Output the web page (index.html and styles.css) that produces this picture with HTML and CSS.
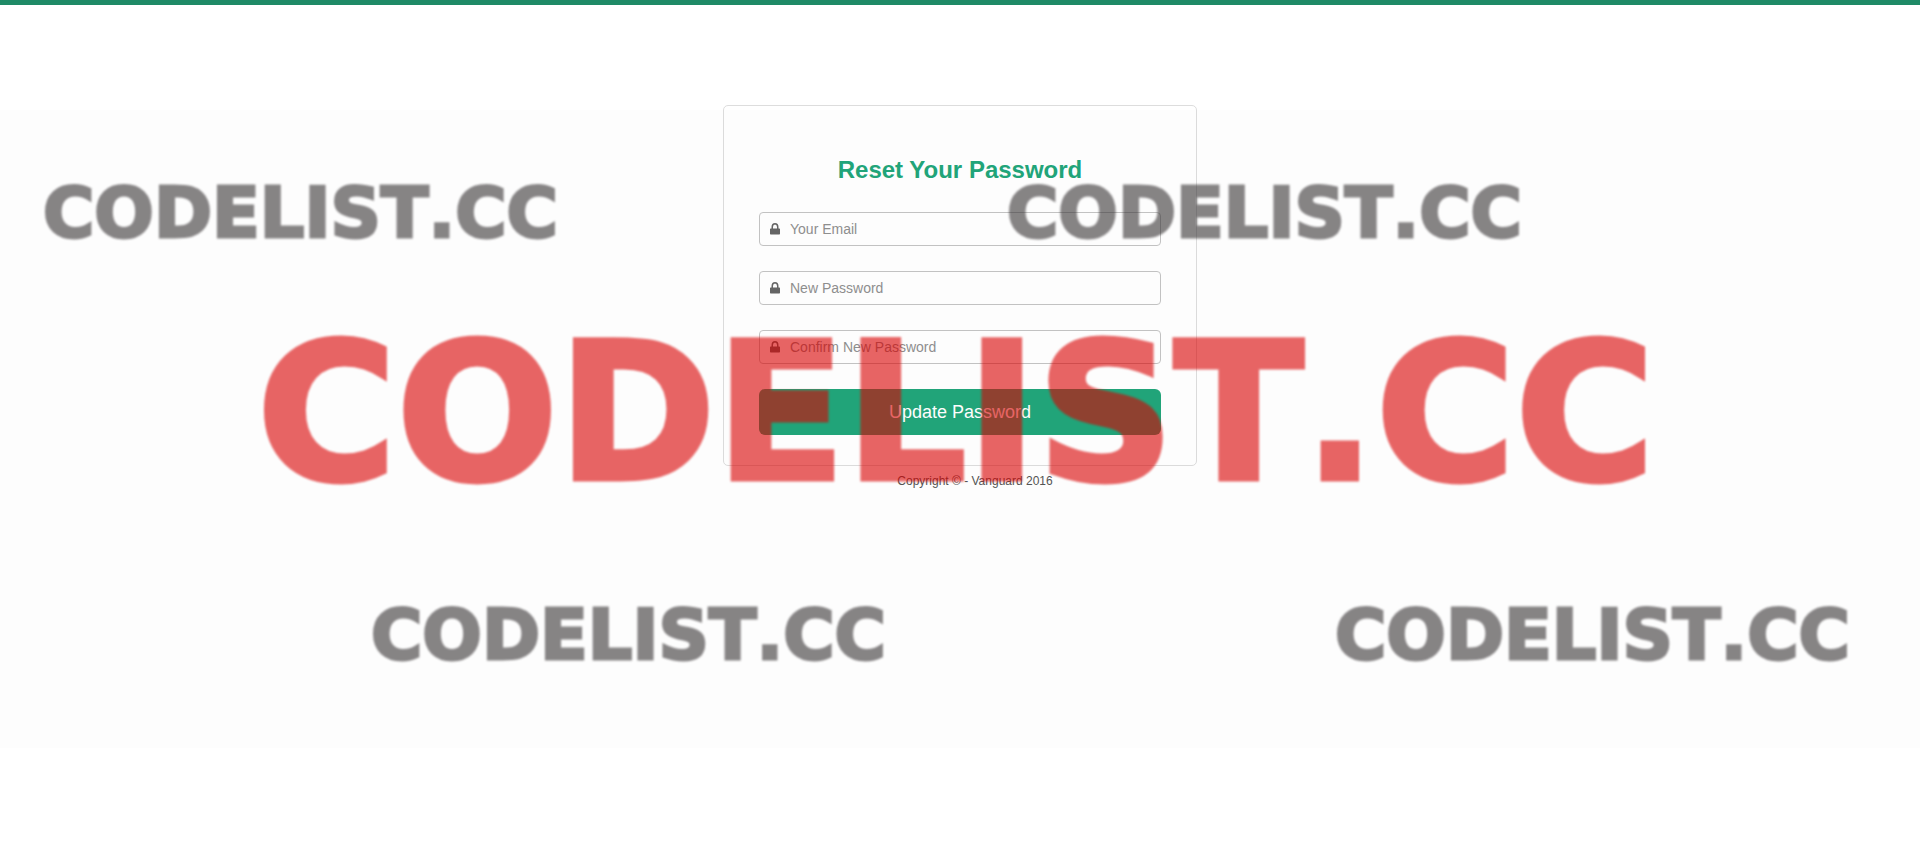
FILE: index.html
```
<!DOCTYPE html>
<html lang="en">
<head>
<meta charset="utf-8">
<title>Reset Your Password</title>
<link rel="stylesheet" href="styles.css">
</head>
<body>
<main class="page">
  <form class="card">
    <h1 class="title">Reset Your Password</h1>
    <label class="field">
      <svg class="icon" viewBox="0 0 10 12" aria-hidden="true"><path fill-rule="evenodd" d="M1.500 5.500V4a3.500 4 0 0 1 7 0v1.500h.8q.7 0 .7.700v4.600q0 .7-.7.700H.7q-.7 0-.7-.7V6.200q0-.7.7-.7zM3 5.500h4V4a2 2.500 0 0 0-4 0z"/></svg>
      <input class="input" type="text" placeholder="Your Email" aria-label="Your Email">
    </label>
    <label class="field">
      <svg class="icon" viewBox="0 0 10 12" aria-hidden="true"><path fill-rule="evenodd" d="M1.500 5.500V4a3.500 4 0 0 1 7 0v1.500h.8q.7 0 .7.700v4.600q0 .7-.7.700H.7q-.7 0-.7-.7V6.200q0-.7.7-.7zM3 5.500h4V4a2 2.500 0 0 0-4 0z"/></svg>
      <input class="input" type="password" placeholder="New Password" aria-label="New Password">
    </label>
    <label class="field">
      <svg class="icon" viewBox="0 0 10 12" aria-hidden="true"><path fill-rule="evenodd" d="M1.500 5.500V4a3.500 4 0 0 1 7 0v1.500h.8q.7 0 .7.700v4.600q0 .7-.7.700H.7q-.7 0-.7-.7V6.200q0-.7.7-.7zM3 5.500h4V4a2 2.500 0 0 0-4 0z"/></svg>
      <input class="input" type="password" placeholder="Confirm New Password" aria-label="Confirm New Password">
    </label>
    <button class="submit" type="button">Update Password</button>
  </form>
  <footer class="copyright">Copyright © - Vanguard 2016</footer>
</main>
<svg class="watermark" viewBox="0 0 1920 638">
  <g class="mark-small">
    <text x="43" y="127">CODELIST.CC</text>
    <text x="1007" y="127">CODELIST.CC</text>
    <text x="371" y="549">CODELIST.CC</text>
    <text x="1335" y="549">CODELIST.CC</text>
  </g>
  <text class="mark-large" x="257" y="369">CODELIST.CC</text>
</svg>
</body>
</html>
```
FILE: styles.css
```
* {
  box-sizing: border-box;
}

body {
  position: relative;
  margin: 0;
  min-height: 100vh;
  border-top: 5px solid #1f8a66;
  background: #fff;
  font-family: "Liberation Sans", Arial, sans-serif;
  font-size: 14px;
  line-height: 20px;
  color: #444;
}

.page {
  max-width: 474px;
  margin: 0 auto;
  padding-top: 100px;
}

.card {
  display: flex;
  flex-direction: column;
  gap: 25px;
  padding: 48px 35px 30px;
  border: 1px solid #ddd;
  border-radius: 5px;
}

.title {
  margin: 0 0 1px;
  font-size: 24px;
  line-height: 32px;
  font-weight: bold;
  text-align: center;
  color: #22a67a;
}

.field {
  display: flex;
  align-items: center;
  gap: 10px;
  height: 34px;
  padding: 0 10px;
  border: 1px solid #c4c4c4;
  border-radius: 4px;
}

.icon {
  flex: none;
  width: 10px;
  height: 12px;
  fill: #666;
}

.input {
  flex: 1;
  min-width: 0;
  padding: 0;
  border: 0;
  outline: 0;
  background: transparent;
  font: inherit;
}

.input::placeholder {
  color: #909090;
  opacity: 1;
}

.submit {
  height: 46px;
  border: 0;
  border-radius: 6px;
  background: #22a67a;
  font: 18px "Liberation Sans", Arial, sans-serif;
  color: #fff;
}

.copyright {
  padding: 5px 0 0 30px;
  font-size: 12px;
  text-align: center;
  color: #555;
}

.watermark {
  position: absolute;
  top: 105px;
  left: 0;
  width: 100%;
  background: rgba(0, 0, 0, 0.008);
  font-family: "DejaVu Sans", sans-serif;
  font-weight: bold;
  font-kerning: none;
  pointer-events: none;
}

.mark-small {
  font-size: 70px;
  fill: #383435;
  stroke: #383435;
  stroke-width: 3px;
  opacity: 0.6;
  filter: blur(1px);
}

.mark-large {
  font-size: 190px;
  fill: #d90000;
  stroke: #d90000;
  stroke-width: 5px;
  opacity: 0.6;
  filter: blur(1px);
}
```
